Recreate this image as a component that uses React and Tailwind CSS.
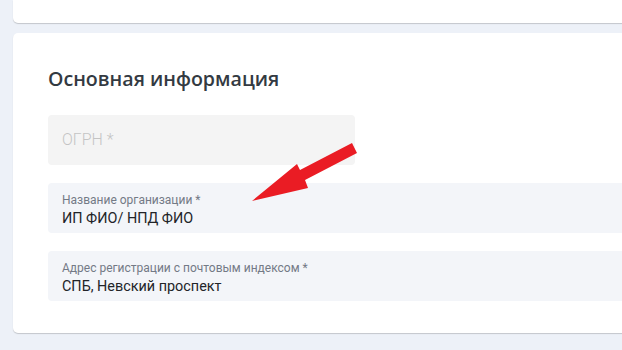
import React from "react";

function Field({ label, value }) {
  return (
    <div
      className="h-[50px] w-[600px] rounded-[4px] bg-[#f3f5f9] pl-[14px] pt-[9px]"
      style={{ fontFamily: '"Roboto", "Noto Sans", sans-serif' }}
    >
      <div className="text-[12px] leading-[16px] text-[#737a86]">{label}</div>
      <div className="text-[14.4px] leading-[21px] text-[#222428]">{value}</div>
    </div>
  );
}

export default function App() {
  return (
    <div
      className="relative h-[350px] w-[622px] overflow-hidden bg-[#edf1f8] pl-[13px]"
      style={{ fontFamily: '"Open Sans", "Noto Sans", sans-serif' }}
    >
      <div className="h-[23px] w-[640px] rounded-b-[5px] bg-white shadow-[0_1px_1px_rgba(0,0,0,0.18)]" />
      <div className="mt-[10px] h-[300px] w-[640px] rounded-[5px] bg-white pl-[35px] pt-[32px] shadow-[0_1px_1px_rgba(0,0,0,0.18)]">
        <h2 className="text-[19.6px] font-semibold leading-[28px] text-[#333a42]">
          Основная информация
        </h2>
        <div className="mt-[22px] flex h-[50px] w-[307px] items-center rounded-[4px] bg-[#f4f4f4] pl-[14px]">
          <span
            className="text-[16px] font-light text-[#c4c4c4]"
            style={{ fontFamily: '"Roboto", sans-serif' }}
          >
            ОГРН *
          </span>
        </div>
        <div className="mt-[18px]">
          <Field label="Название организации *" value=" ИП ФИО/ НПД ФИО" />
        </div>
        <div className="mt-[18px]">
          <Field label="Адрес регистрации с почтовым индексом *" value="СПБ, Невский проспект" />
        </div>
      </div>
      <svg
        className="absolute left-0 top-0"
        width="622"
        height="350"
        viewBox="0 0 622 350"
      >
        <polygon
          points="252,201 297,164 300,170 352,143 357,153 305,180 308,188"
          fill="#ea1c24"
        />
      </svg>
    </div>
  );
}
